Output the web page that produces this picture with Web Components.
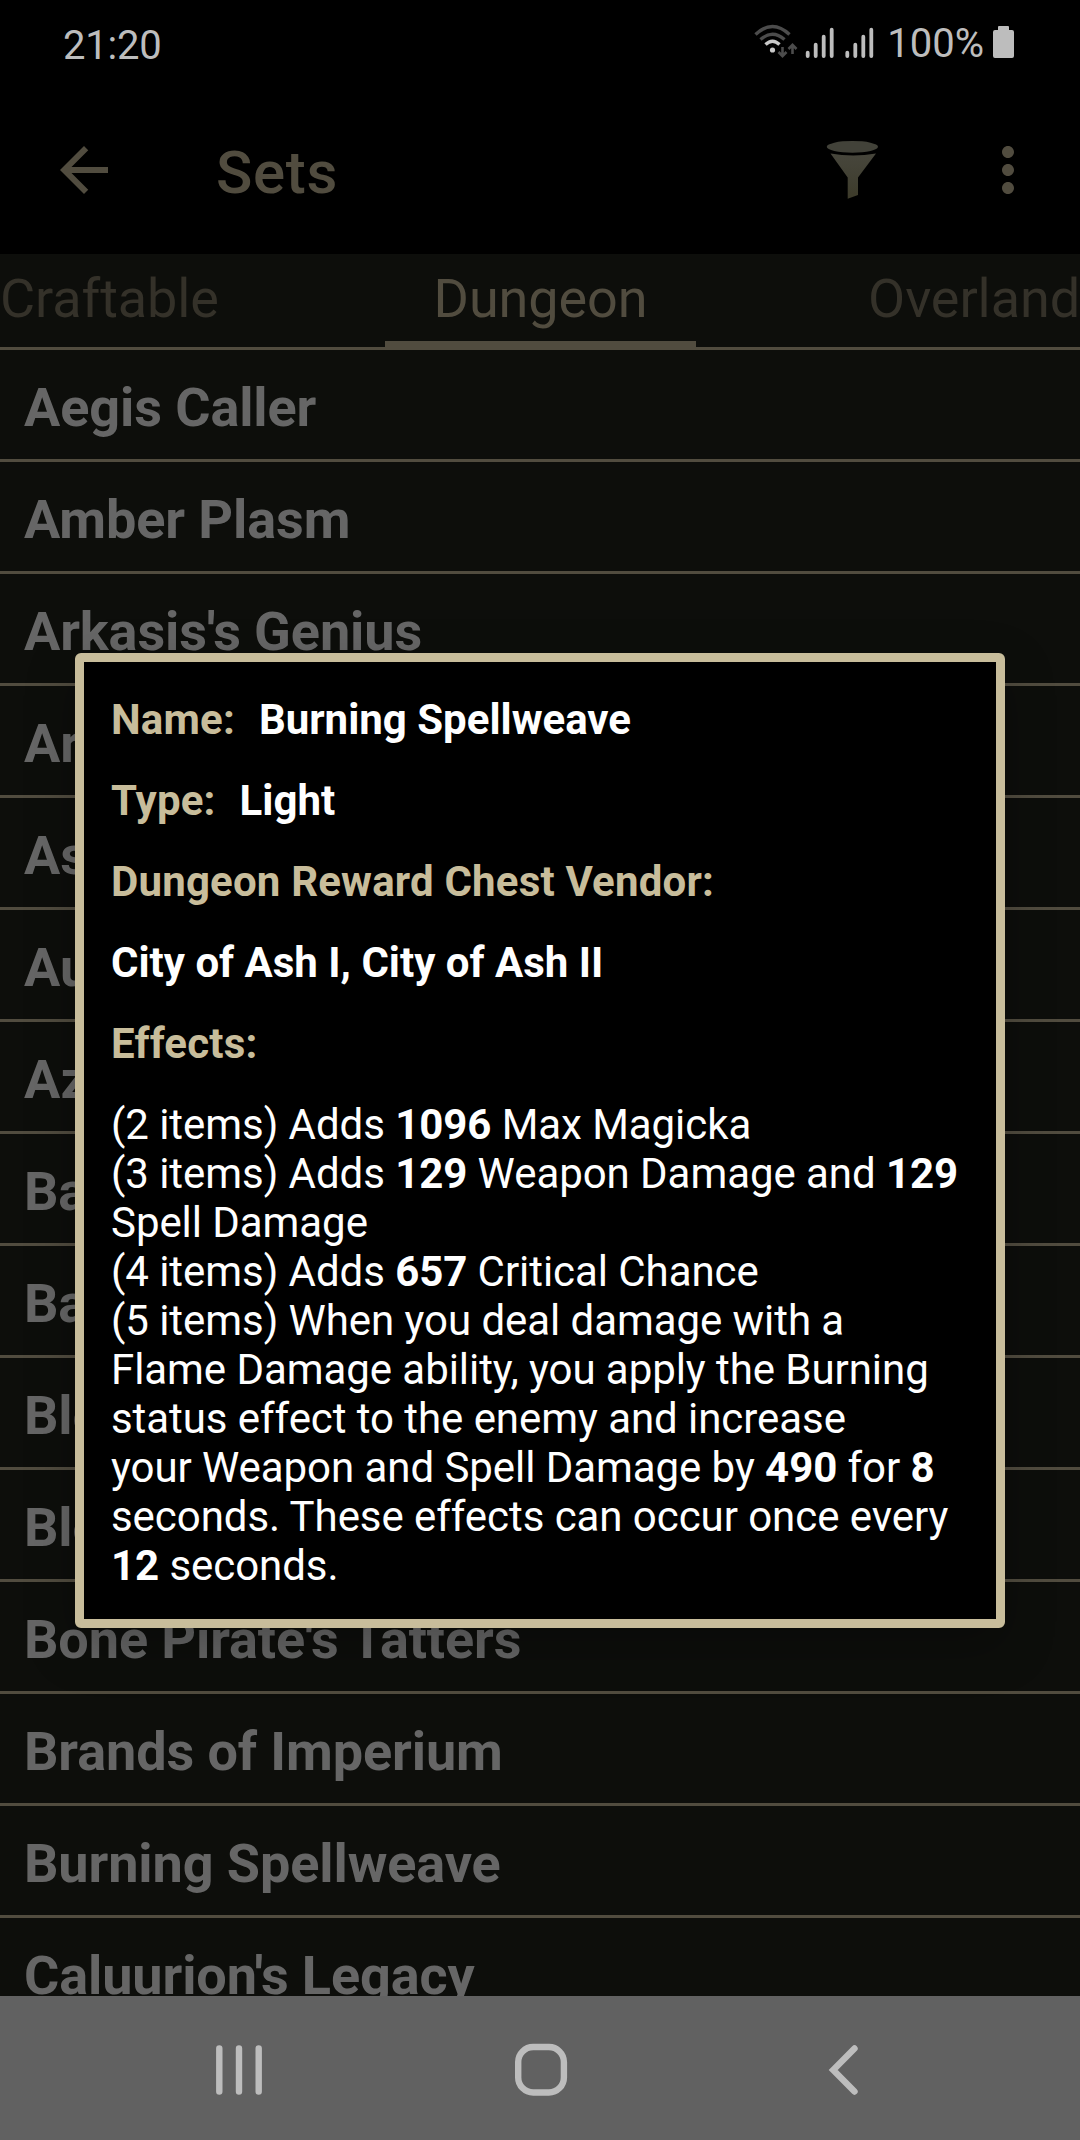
<!DOCTYPE html>
<html lang="en">
<head>
<meta charset="utf-8">
<title>Sets</title>
<style>
  html, body {
    margin: 0;
    background: #000;
  }
</style>
</head>
<body>
<eso-app></eso-app>

<script>
"use strict";

(() => {
  customElements.define("eso-status-bar", class extends HTMLElement {
    constructor() {
      super();

      this.attachShadow({mode: "open"}).innerHTML = `
        <style>
          :host {
            display: flex;
            box-sizing: border-box;
            height: 84px;
            padding: 0 66px 0 63px;
            justify-content: space-between;
            background: #000;
            color: #bdbdbd;
            font-size: 40px;
            line-height: 92px;
          }

          #time {
            letter-spacing: -.2px;
          }

          #icons {
            display: flex;
          }

          #level {
            margin: 0 1px 0 12px;
            line-height: 88px;
          }

          svg {
            display: block;
          }
        </style>

        <span id="time">21:20</span>
        <div id="icons">
          <svg width="121" height="84" viewBox="754 0 121 84" fill="none" stroke-linecap="round">
            <g stroke-width="3.4" stroke-linecap="butt">
              <path d="M755.5 34.5Q772.5 18.5 789.5 34.5" stroke="#4c4c4c"/>
              <path d="M760.5 39.5Q772.5 29 784.5 39.5" stroke="#4c4c4c"/>
              <path d="M765.5 44.5Q772.5 38 779.5 44.5" stroke="#c9c9c9"/>
            </g>
            <circle cx="772.5" cy="50" r="2.6" fill="#c9c9c9"/>
            <g stroke="#4c4c4c" stroke-width="2.6" stroke-linecap="butt">
              <path d="M782.5 47v9M778.5 52l4 4.2 4-4.2M792.5 54v-9M788.5 49l4-4.2 4 4.2"/>
            </g>
            <g stroke="#bdbdbd" stroke-width="3.8">
              <path d="M807.7 52.7v3.4M815.7 44.7v11.4M823.7 36.7v19.4M831.7 29.7v26.4"/>
              <path d="M847.3 52.7v3.4M855.3 44.7v11.4M863.3 36.7v19.4M871.3 29.7v26.4"/>
            </g>
          </svg>
          <span id="level">100%</span>
          <svg width="29" height="84" viewBox="985 0 29 84" fill="#bdbdbd">
            <path d="M999 26h9q1 0 1 1v3h3q2 0 2 2v24q0 2-2 2h-17q-2 0-2-2v-24q0-2 2-2h3v-3q0-1 1-1z"/>
          </svg>
        </div>
      `;
    }
  });

  customElements.define("eso-app-bar", class extends HTMLElement {
    constructor() {
      super();

      this.attachShadow({mode: "open"}).innerHTML = `
        <style>
          :host {
            display: flex;
            box-sizing: border-box;
            height: 170px;
            padding: 2px 36px 0 48px;
            align-items: center;
            background: #000;
            color: #514c3f;
          }

          svg {
            display: block;
          }

          #title {
            flex: 1;
            margin: 5px 0 0 96px;
            font-size: 60px;
            font-weight: 500;
            letter-spacing: .7px;
            line-height: 72px;
          }

          #filter {
            margin-right: 84px;
          }
        </style>

        <svg width="72" height="72" viewBox="0 0 24 24" fill="currentColor">
          <path d="M20 11H7.83l5.59-5.59L12 4l-8 8 8 8 1.41-1.41L7.83 13H20v-2z"/>
        </svg>
        <span id="title"><slot></slot></span>
        <svg id="filter" width="72" height="72" viewBox="816 134 72 72">
          <defs>
            <linearGradient id="metal" x1="0" x2="0" y1="0" y2="1">
              <stop offset="0" stop-color="#47463c"/>
              <stop offset=".5" stop-color="#424134"/>
              <stop offset="1" stop-color="#3d3b2a"/>
            </linearGradient>
          </defs>
          <ellipse cx="852.4" cy="146.800" rx="25.600" ry="5.900" fill="#424239"/>
          <path d="M830.500 153.500Q853 157.500 876 153.500L858 177.500V195L847.700 198.800V177.500z" fill="url(#metal)"/>
        </svg>
        <svg width="72" height="72" viewBox="0 0 24 24" fill="currentColor">
          <path d="M12 8c1.100 0 2-.9 2-2s-.9-2-2-2-2 .9-2 2 .9 2 2 2zm0 2c-1.100 0-2 .9-2 2s.9 2 2 2 2-.9 2-2-.9-2-2-2zm0 6c-1.100 0-2 .9-2 2s.9 2 2 2 2-.9 2-2-.9-2-2-2z"/>
        </svg>
      `;
    }
  });

  customElements.define("eso-tab-strip", class extends HTMLElement {
    constructor() {
      super();

      this.attachShadow({mode: "open"}).innerHTML = `
        <style>
          :host {
            display: grid;
            grid-template: 93px / 385px 311px 384px;
            box-sizing: border-box;
            height: 96px;
            border-bottom: 3px solid #514c3f;
            background: #0d0e0b;
            font-size: 54px;
            line-height: 90px;
            letter-spacing: -.1px;
            color: #343129;
          }

          #current {
            box-sizing: border-box;
            height: 93px;
            border-bottom: 6px solid #514c3f;
            color: #514c3f;
            text-align: center;
          }

          #next {
            text-align: right;
          }
        </style>

        <span>Craftable</span>
        <span id="current">Dungeon</span>
        <span id="next">Overland</span>
      `;
    }
  });

  customElements.define("eso-set-row", class extends HTMLElement {
    constructor() {
      super();

      this.attachShadow({mode: "open"}).innerHTML = `
        <style>
          :host {
            display: block;
            flex: none;
            box-sizing: border-box;
            height: 112px;
            padding-left: 24px;
            border-bottom: 3px solid #514c3f;
            color: #666;
            font-size: 54px;
            font-weight: 700;
            letter-spacing: -.1px;
            line-height: 116px;
            white-space: nowrap;
          }
        </style>

        <slot></slot>
      `;
    }
  });

  customElements.define("eso-field", class extends HTMLElement {
    constructor() {
      super();

      this.attachShadow({mode: "open"}).innerHTML = `
        <style>
          :host {
            display: flex;
            gap: 24px;
            height: 49px;
            margin-bottom: 32px;
            font-weight: 700;
            white-space: nowrap;
          }

          #label {
            color: #c8bd9b;
            letter-spacing: .18px;
          }

          #label:empty {
            display: none;
          }
        </style>

        <span id="label"></span>
        <span><slot></slot></span>
      `;

      this.shadowRoot.getElementById("label").textContent = this.getAttribute("label") || "";
    }
  });

  customElements.define("eso-set-dialog", class extends HTMLElement {
    constructor() {
      super();

      this.attachShadow({mode: "open"}).innerHTML = `
        <style>
          :host {
            display: block;
            box-sizing: border-box;
            width: 930px;
            height: 975px;
            padding: 33px 27px 0;
            border: 9px solid #c8bd9b;
            border-radius: 6px;
            background: #000;
            box-shadow: 0 18px 50px rgba(0, 0, 0, .25);
            color: #fff;
            font-size: 42px;
            line-height: 49px;
          }

          #effects {
            letter-spacing: -.06px;
            white-space: nowrap;
          }
        </style>

        <eso-field label="Name:">Burning Spellweave</eso-field>
        <eso-field label="Type:">Light</eso-field>
        <eso-field label="Dungeon Reward Chest Vendor:"></eso-field>
        <eso-field>City of Ash I, City of Ash II</eso-field>
        <eso-field label="Effects:"></eso-field>
        <div id="effects">
          (2 items) Adds <b>1096</b> Max Magicka<br>
          (3 items) Adds <b>129</b> Weapon Damage and <b>129</b><br>
          Spell Damage<br>
          (4 items) Adds <b>657</b> Critical Chance<br>
          (5 items) When you deal damage with a<br>
          Flame Damage ability, you apply the Burning<br>
          status effect to the enemy and increase<br>
          your Weapon and Spell Damage by <b>490</b> for <b>8</b><br>
          seconds. These effects can occur once every<br>
          <b>12</b> seconds.
        </div>
      `;
    }
  });

  customElements.define("eso-nav-bar", class extends HTMLElement {
    constructor() {
      super();

      this.attachShadow({mode: "open"}).innerHTML = `
        <style>
          :host {
            display: flex;
            height: 144px;
            background: #616161;
          }

          svg {
            display: block;
          }
        </style>

        <svg width="1080" height="144" viewBox="0 1996 1080 144" fill="none" stroke="#bdbdbd" stroke-width="6.400" stroke-linecap="round">
          <path d="M219.300 2048.500v43M239 2048.500v43M258.700 2048.500v43"/>
          <rect x="518.200" y="2047" width="45.700" height="45.500" rx="15"/>
          <path d="M854.500 2048.500L833.200 2070l21.300 21.500"/>
        </svg>
      `;
    }
  });

  const SETS = [
    "Aegis Caller",
    "Amber Plasm",
    "Arkasis's Genius",
    "Armor of Icons",
    "Aspect of Mazzatun",
    "Auroran's Thunder",
    "Azureblight Reaper",
    "Bani's Torment",
    "Barkskin",
    "Blessed Dignity",
    "Bloodspawn",
    "Bone Pirate's Tatters",
    "Brands of Imperium",
    "Burning Spellweave",
    "Caluurion's Legacy"
  ];

  customElements.define("eso-app", class extends HTMLElement {
    constructor() {
      super();

      this.attachShadow({mode: "open"}).innerHTML = `
        <style>
          :host {
            display: flex;
            flex-direction: column;
            position: relative;
            width: 1080px;
            height: 2140px;
            overflow: hidden;
            background: #0d0e0b;
            font-family: Roboto, "Noto Sans", sans-serif;
          }

          #list {
            display: flex;
            flex-direction: column;
            flex: 1;
            min-height: 0;
            overflow: hidden;
          }

          eso-set-dialog {
            position: absolute;
            left: 75px;
            top: 653px;
          }
        </style>

        <eso-status-bar></eso-status-bar>
        <eso-app-bar>Sets</eso-app-bar>
        <eso-tab-strip></eso-tab-strip>
        <div id="list"></div>
        <eso-nav-bar></eso-nav-bar>
        <eso-set-dialog></eso-set-dialog>
      `;

      const listElem = this.shadowRoot.getElementById("list");
      for (const name of SETS) {
        const row = document.createElement("eso-set-row");
        row.textContent = name;
        listElem.appendChild(row);
      }
    }
  });
})();
</script>
</body>
</html>
